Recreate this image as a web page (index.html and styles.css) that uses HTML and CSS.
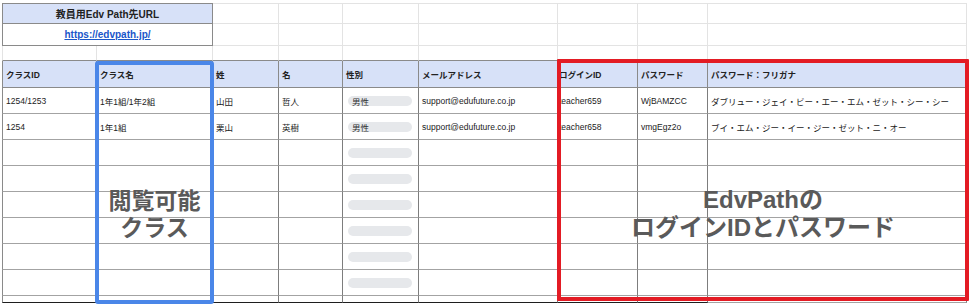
FILE: index.html
```html
<!DOCTYPE html>
<html lang="ja">
<head>
<meta charset="utf-8">
<title>EdvPath 教員用シート</title>
<link rel="stylesheet" href="styles.css">
</head>
<body>
<div class="sheet">
  <div class="grid">
    <div class="cell box box-top title">教員用Edv Path先URL</div>
    <div class="cell top"></div><div class="cell top"></div><div class="cell top"></div><div class="cell top"></div><div class="cell top"></div><div class="cell top"></div><div class="cell top"></div>

    <div class="cell box linkcell"><a class="link" href="#">https://edvpath.jp/</a></div>
    <div class="cell"></div><div class="cell"></div><div class="cell"></div><div class="cell"></div><div class="cell"></div><div class="cell"></div><div class="cell"></div>

    <div class="cell gap first"></div><div class="cell gap"></div><div class="cell gap"></div><div class="cell gap"></div><div class="cell gap"></div><div class="cell gap"></div><div class="cell gap"></div><div class="cell gap"></div><div class="cell gap"></div>

    <div class="cell th first">クラスID</div>
    <div class="cell th">クラス名</div>
    <div class="cell th">姓</div>
    <div class="cell th">名</div>
    <div class="cell th">性別</div>
    <div class="cell th">メールアドレス</div>
    <div class="cell th tight">ログインID</div>
    <div class="cell th">パスワード</div>
    <div class="cell th">パスワード：フリガナ</div>

    <div class="cell td first">1254/1253</div>
    <div class="cell td">1年1組/1年2組</div>
    <div class="cell td">山田</div>
    <div class="cell td">哲人</div>
    <div class="cell td"><span class="chip">男性</span></div>
    <div class="cell td">support@edufuture.co.jp</div>
    <div class="cell td tight">teacher659</div>
    <div class="cell td">WjBAMZCC</div>
    <div class="cell td">ダブリュー・ジェイ・ビー・エー・エム・ゼット・シー・シー</div>

    <div class="cell td first">1254</div>
    <div class="cell td">1年1組</div>
    <div class="cell td">栗山</div>
    <div class="cell td">英樹</div>
    <div class="cell td"><span class="chip">男性</span></div>
    <div class="cell td">support@edufuture.co.jp</div>
    <div class="cell td tight">teacher658</div>
    <div class="cell td">vmgEgz2o</div>
    <div class="cell td">ブイ・エム・ジー・イー・ジー・ゼット・ニ・オー</div>

    <div class="cell td first"></div><div class="cell td"></div><div class="cell td"></div><div class="cell td"></div><div class="cell td"><span class="chip"></span></div><div class="cell td"></div><div class="cell td"></div><div class="cell td"></div><div class="cell td"></div>
    <div class="cell td first"></div><div class="cell td"></div><div class="cell td"></div><div class="cell td"></div><div class="cell td"><span class="chip"></span></div><div class="cell td"></div><div class="cell td"></div><div class="cell td"></div><div class="cell td"></div>
    <div class="cell td first"></div><div class="cell td"></div><div class="cell td"></div><div class="cell td"></div><div class="cell td"><span class="chip"></span></div><div class="cell td"></div><div class="cell td"></div><div class="cell td"></div><div class="cell td"></div>
    <div class="cell td first"></div><div class="cell td"></div><div class="cell td"></div><div class="cell td"></div><div class="cell td"><span class="chip"></span></div><div class="cell td"></div><div class="cell td"></div><div class="cell td"></div><div class="cell td"></div>
    <div class="cell td first"></div><div class="cell td"></div><div class="cell td"></div><div class="cell td"></div><div class="cell td"><span class="chip"></span></div><div class="cell td"></div><div class="cell td"></div><div class="cell td"></div><div class="cell td"></div>
    <div class="cell td first"></div><div class="cell td"></div><div class="cell td"></div><div class="cell td"></div><div class="cell td"><span class="chip"></span></div><div class="cell td"></div><div class="cell td"></div><div class="cell td"></div><div class="cell td"></div>

    <div class="cell td end first"></div><div class="cell td end"></div><div class="cell td end"></div><div class="cell td end"></div><div class="cell td end"></div><div class="cell td end"></div><div class="cell td end"></div><div class="cell td end"></div><div class="cell td"></div>
  </div>

  <div class="frame frame-blue"><div class="note note-blue">閲覧可能<br>クラス</div></div>
  <div class="frame frame-red"><div class="note note-red">EdvPathの<br>ログインIDとパスワード</div></div>
</div>
</body>
</html>
```

FILE: styles.css
```css
html, body {
  margin: 0;
  padding: 0;
  background: #ffffff;
}

.sheet {
  position: relative;
  width: 973px;
  height: 307px;
  overflow: hidden;
  padding: 3px 0 0 2px;
  box-sizing: border-box;
  font-family: "Liberation Sans", "Noto Sans CJK JP", Arial, sans-serif;
  color: #222222;
}

.grid {
  display: grid;
  grid-template-columns: 95px 116px 66px 64px 76px 139px 80px 70px 259px;
  grid-template-rows: 21px 22px 15px 27px repeat(8, 26px) 7px;
}

.cell {
  box-sizing: border-box;
  display: flex;
  align-items: center;
  padding: 0 0 0 3px;
  overflow: hidden;
  white-space: nowrap;
  font-size: 8.5px;
  border-right: 1px solid #e3e3e3;
  border-bottom: 1px solid #e3e3e3;
}

.top {
  border-top: 1px solid #e3e3e3;
}

.first {
  border-left: 1px solid #e3e3e3;
}

.box {
  grid-column: span 2;
  justify-content: center;
  padding: 0;
  border-left: 1px solid #8a8a8a;
  border-right: 1px solid #8a8a8a;
  border-bottom: 1px solid #8a8a8a;
  font-size: 10px;
  font-weight: 700;
}

.box-top {
  border-top: 1px solid #8a8a8a;
}

.title {
  background: #d7e1f8;
  color: #222222;
}

.link {
  color: #1a56c9;
  text-decoration: underline;
  font-weight: 700;
}

.gap {
  border-bottom: 1px solid #8a8a8a;
}

.th {
  background: #d7e1f8;
  font-weight: 700;
  border-right: 1px solid #8a8a8a;
  border-bottom: 1px solid #8a8a8a;
}

.th.first,
.td.first {
  border-left: 1px solid #8a8a8a;
}

.td {
  border-right: 1px solid #7d7d7d;
  border-bottom: 1px solid #a3a3a3;
}

.tight {
  padding-left: 1px;
}

.end {
  border-bottom: 1px solid #1e1e1e;
}

.chip {
  box-sizing: border-box;
  display: flex;
  align-items: center;
  width: 64px;
  height: 10px;
  margin-left: 2px;
  padding-left: 4px;
  border-radius: 5px;
  background: #e6e8eb;
  color: #333333;
  font-size: 8.5px;
}

.frame {
  position: absolute;
  box-sizing: border-box;
}

.frame-blue {
  left: 95px;
  top: 61px;
  width: 119px;
  height: 243px;
  border: 4px solid #4a86e8;
  border-radius: 3px;
}

.frame-red {
  left: 557px;
  top: 59px;
  width: 412px;
  height: 242px;
  border: 4px solid #e31b24;
  border-radius: 1px;
}

.note {
  font-family: "Liberation Sans", "Noto Sans CJK JP", sans-serif;
  font-weight: 700;
  font-size: 23px;
  line-height: 27px;
  color: #5a5a5a;
  text-align: center;
  white-space: nowrap;
}

.note-blue {
  padding-top: 123px;
}

.note-red {
  font-size: 24px;
  line-height: 28px;
  padding-top: 123px;
}
```
